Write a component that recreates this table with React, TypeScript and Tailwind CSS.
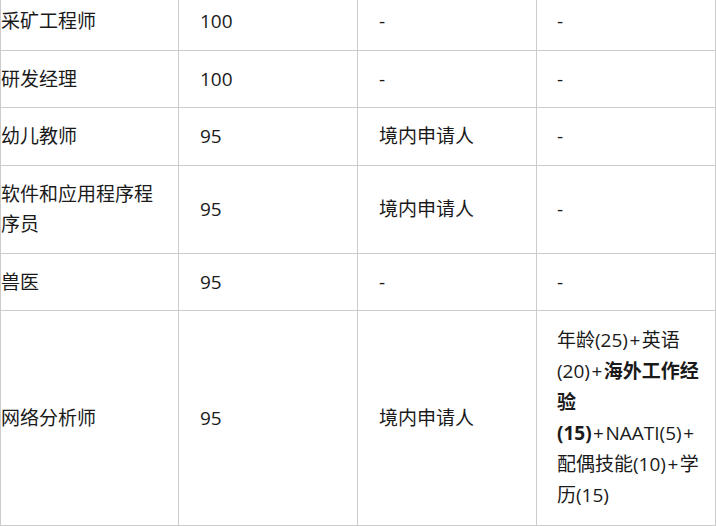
import React from "react";

const P = () => <span className="mx-[1.5px]">+</span>;

const rows: { name: React.ReactNode; score: string; c3: string; c4: React.ReactNode; tall?: boolean }[] = [
  { name: "采矿工程师", score: "100", c3: "-", c4: "-" },
  { name: "研发经理", score: "100", c3: "-", c4: "-" },
  { name: "幼儿教师", score: "95", c3: "境内申请人", c4: "-" },
  { name: "软件和应用程序程序员", score: "95", c3: "境内申请人", c4: "-" },
  { name: "兽医", score: "95", c3: "-", c4: "-" },
  {
    name: "网络分析师",
    score: "95",
    c3: "境内申请人",
    c4: (
      <>
        年龄(25)<P />英语<wbr />(20)<P />
        <strong className="font-bold">海外工作经验<wbr />(15)</strong>
        <P />NAATI(5)<P />
        <wbr />配偶技能(10)<P />学<wbr />历(15)
      </>
    ),
    tall: true,
  },
];

export default function App() {
  return (
    <div
      className="w-[716px] h-[526px] overflow-hidden bg-white text-[#1a1a1a]"
      style={{ fontFamily: '"Open Sans", "Noto Sans CJK SC", sans-serif' }}
    >
      <table className="-mt-[7px] w-[715px] table-fixed border-collapse text-[19px] leading-[30.5px]">
        <colgroup>
          <col className="w-[178px]" />
          <col className="w-[179px]" />
          <col className="w-[179px]" />
          <col className="w-[179px]" />
        </colgroup>
        <tbody>
          {rows.map((r, i) => (
            <tr key={i}>
              <td className="border border-[#cccccc] border-t-0 pl-0 pr-[16px] py-[13px] align-middle">{r.name}</td>
              <td className="border border-[#cccccc] border-t-0 pl-[21px] pr-[14px] py-[13px] align-middle">{r.score}</td>
              <td className="border border-[#cccccc] border-t-0 pl-[21px] pr-[14px] py-[13px] align-middle">{r.c3}</td>
              <td
                className={
                  r.tall
                    ? "border border-[#cccccc] border-t-0 pl-[20px] pr-[12px] pt-[14px] pb-[14px] align-middle leading-[31px]"
                    : "border border-[#cccccc] border-t-0 pl-[20px] pr-[12px] py-[13px] align-middle"
                }
              >
                {r.c4}
              </td>
            </tr>
          ))}
        </tbody>
      </table>
    </div>
  );
}
